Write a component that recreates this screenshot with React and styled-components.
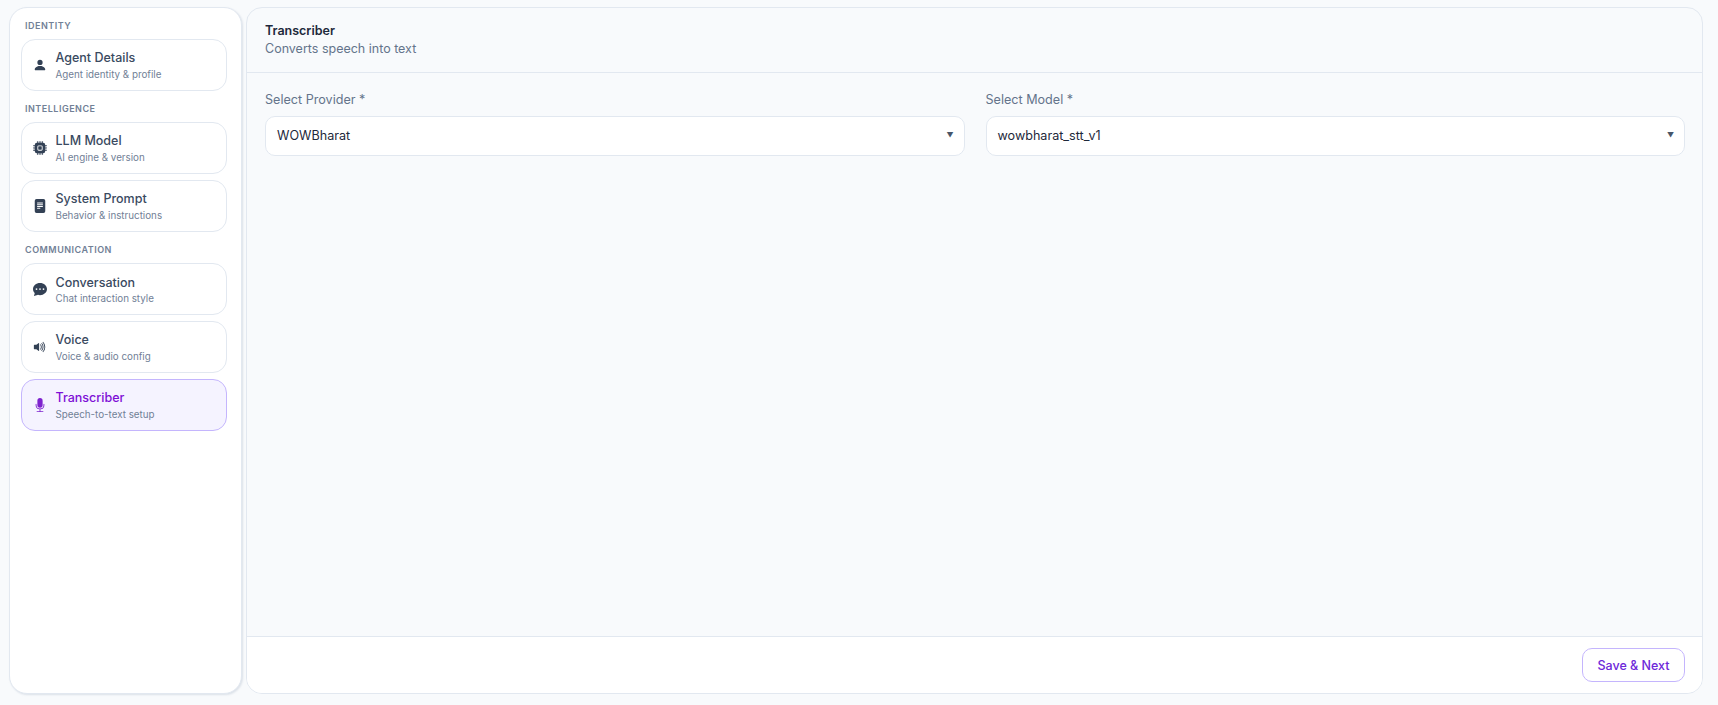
import styled, { createGlobalStyle } from "styled-components";
import {
  BsPersonFill,
  BsCpuFill,
  BsFileTextFill,
  BsChatDotsFill,
  BsVolumeUpFill,
  BsMicFill,
} from "react-icons/bs";

const GlobalStyle = createGlobalStyle`
  html, body {
    margin: 0;
    height: 100%;
    background: #f8fafc;
    font-family: Inter, "Noto Sans", sans-serif;
  }
  * {
    box-sizing: border-box;
  }
`;

const sections = [
  {
    title: "IDENTITY",
    items: [{ icon: BsPersonFill, name: "Agent Details", sub: "Agent identity & profile" }],
  },
  {
    title: "INTELLIGENCE",
    items: [
      { icon: BsCpuFill, name: "LLM Model", sub: "AI engine & version" },
      { icon: BsFileTextFill, name: "System Prompt", sub: "Behavior & instructions" },
    ],
  },
  {
    title: "COMMUNICATION",
    items: [
      { icon: BsChatDotsFill, name: "Conversation", sub: "Chat interaction style" },
      { icon: BsVolumeUpFill, name: "Voice", sub: "Voice & audio config" },
      { icon: BsMicFill, name: "Transcriber", sub: "Speech-to-text setup", active: true },
    ],
  },
];

export default function App() {
  return (
    <PageStyled>
      <GlobalStyle />
      <SidebarStyled>
        {sections.map((section) => (
          <SectionStyled key={section.title}>
            <SectionTitleStyled>{section.title}</SectionTitleStyled>
            {section.items.map(({ icon: Icon, name, sub, active }) => (
              <NavCardStyled key={name} $active={active}>
                <IconWrapStyled $active={active}>
                  <Icon />
                </IconWrapStyled>
                <NavTextStyled>
                  <NavNameStyled $active={active}>{name}</NavNameStyled>
                  <NavSubStyled>{sub}</NavSubStyled>
                </NavTextStyled>
              </NavCardStyled>
            ))}
          </SectionStyled>
        ))}
      </SidebarStyled>
      <MainStyled>
        <HeaderStyled>
          <HeadingStyled>Transcriber</HeadingStyled>
          <SubHeadingStyled>Converts speech into text</SubHeadingStyled>
        </HeaderStyled>
        <BodyStyled>
          <FieldStyled>
            <LabelStyled>Select Provider *</LabelStyled>
            <SelectStyled>
              WOWBharat
              <CaretStyled>▼</CaretStyled>
            </SelectStyled>
          </FieldStyled>
          <FieldStyled>
            <LabelStyled>Select Model *</LabelStyled>
            <SelectStyled>
              wowbharat_stt_v1
              <CaretStyled>▼</CaretStyled>
            </SelectStyled>
          </FieldStyled>
        </BodyStyled>
        <FooterStyled>
          <SaveButtonStyled>Save &amp; Next</SaveButtonStyled>
        </FooterStyled>
      </MainStyled>
    </PageStyled>
  );
}

const PageStyled = styled.div`
  height: 705px;
  display: flex;
  gap: 4px;
  padding: 7px 15px 11px 9px;
`;
const SidebarStyled = styled.aside`
  width: 233px;
  flex: none;
  background: #fff;
  border: 1px solid #e2e8f0;
  border-radius: 18px;
  box-shadow: 1px 1px 2px rgba(148, 163, 184, 0.28);
  padding: 10px 14px 10px 11px;
  display: flex;
  flex-direction: column;
  gap: 10.5px;
`;
const SectionStyled = styled.section`
  display: flex;
  flex-direction: column;
  gap: 6px;
`;
const SectionTitleStyled = styled.h3`
  margin: 0 0 0 4px;
  font-size: 9px;
  line-height: 15px;
  font-weight: 600;
  letter-spacing: 0.5px;
  color: #718096;
`;
const NavCardStyled = styled.div`
  height: 51.8px;
  display: flex;
  align-items: center;
  gap: 8.5px;
  padding: 0 11px;
  border-radius: 14px;
  border: 1px solid ${({ $active }) => ($active ? "#c4b5fd" : "#e2e8f0")};
  background: ${({ $active }) => ($active ? "#f5f3ff" : "#fff")};
`;
const IconWrapStyled = styled.span`
  width: 14px;
  flex: none;
  display: flex;
  justify-content: center;
  font-size: 14px;
  color: ${({ $active }) => ($active ? "#7e22ce" : "#334155")};
`;
const NavTextStyled = styled.div`
  padding-top: 1px;
`;
const NavNameStyled = styled.div`
  font-size: 12.5px;
  line-height: 18px;
  font-weight: 500;
  color: ${({ $active }) => ($active ? "#7e0fd6" : "#3a4a5f")};
`;
const NavSubStyled = styled.div`
  font-size: 9.8px;
  line-height: 14px;
  margin-top: 0.5px;
  color: #718096;
`;
const MainStyled = styled.main`
  flex: 1;
  display: flex;
  flex-direction: column;
  border: 1px solid #e2e8f0;
  border-radius: 16px;
  overflow: hidden;
  background: #f8fafc;
`;
const HeaderStyled = styled.header`
  height: 65px;
  flex: none;
  padding: 14px 18px 0;
  border-bottom: 1px solid #e2e8f0;
`;
const HeadingStyled = styled.h1`
  margin: 0;
  font-size: 12.5px;
  line-height: 18px;
  font-weight: 600;
  color: #1e293b;
`;
const SubHeadingStyled = styled.p`
  margin: 0;
  font-size: 12.5px;
  line-height: 18px;
  color: #64748b;
`;
const BodyStyled = styled.div`
  flex: 1;
  display: grid;
  grid-template-columns: 1fr 1fr;
  column-gap: 21px;
  align-content: start;
  padding: 18px 17px 0 18px;
`;
const FieldStyled = styled.div`
  display: flex;
  flex-direction: column;
  gap: 7px;
`;
const LabelStyled = styled.label`
  font-size: 12.6px;
  line-height: 18px;
  color: #64748b;
`;
const SelectStyled = styled.div`
  height: 39.5px;
  display: flex;
  align-items: center;
  justify-content: space-between;
  padding: 0 10px 0 11px;
  background: #fff;
  border: 1px solid #e2e8f0;
  border-radius: 10px;
  font-size: 12.6px;
  color: #1e293b;
`;
const CaretStyled = styled.span`
  font-size: 7px;
  color: #475569;
`;
const FooterStyled = styled.footer`
  height: 57px;
  flex: none;
  display: flex;
  justify-content: flex-end;
  align-items: center;
  padding: 0 17px 0 0;
  background: #fff;
  border-top: 1px solid #e2e8f0;
`;
const SaveButtonStyled = styled.button`
  width: 103px;
  height: 34px;
  background: #fff;
  border: 1px solid #c4b5fd;
  border-radius: 10px;
  font-family: inherit;
  font-size: 12.5px;
  font-weight: 500;
  color: #6d28d9;
`;
